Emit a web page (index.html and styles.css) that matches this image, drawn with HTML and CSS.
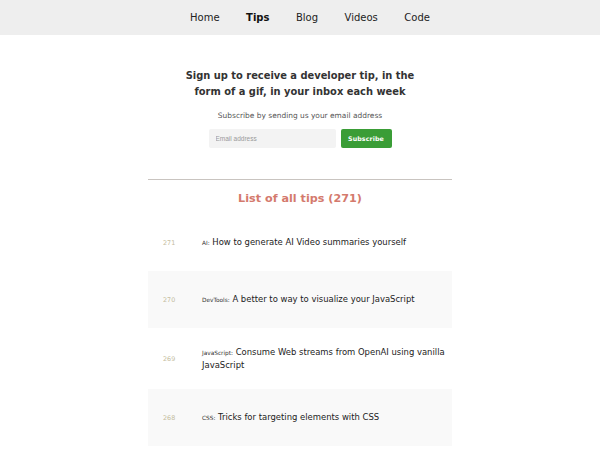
FILE: index.html
```html
<!DOCTYPE html>
<html lang="en">
<head>
<meta charset="utf-8">
<title>Tips</title>
<link rel="stylesheet" href="styles.css">
</head>
<body>
<nav class="topnav">
  <a class="navlink" href="#">Home</a>
  <a class="navlink active" href="#">Tips</a>
  <a class="navlink" href="#">Blog</a>
  <a class="navlink" href="#">Videos</a>
  <a class="navlink" href="#">Code</a>
</nav>
<main class="page">
  <section class="signup">
    <h2 class="signup-title">Sign up to receive a developer tip, in the form of a gif, in your inbox each week</h2>
    <p class="signup-sub">Subscribe by sending us your email address</p>
    <form class="signup-form">
      <input class="email" type="email" placeholder="Email address">
      <button class="subscribe" type="button">Subscribe</button>
    </form>
  </section>
  <hr class="divider">
  <h2 class="list-title">List of all tips (271)</h2>
  <ul class="tips">
    <li class="tip"><span class="num">271</span><span class="text"><span class="cat">AI:</span> How to generate AI Video summaries yourself</span></li>
    <li class="tip alt"><span class="num">270</span><span class="text"><span class="cat">DevTools:</span> A better to way to visualize your JavaScript</span></li>
    <li class="tip"><span class="num">269</span><span class="text"><span class="cat">JavaScript:</span> Consume Web streams from OpenAI using vanilla JavaScript</span></li>
    <li class="tip alt"><span class="num">268</span><span class="text"><span class="cat">CSS:</span> Tricks for targeting elements with CSS</span></li>
  </ul>
</main>
</body>
</html>
```

FILE: styles.css
```css
* { box-sizing: border-box; }
html, body { margin: 0; padding: 0; background: #fff; }
body {
  font-family: "DejaVu Sans", Verdana, sans-serif;
  color: #222;
}
.topnav {
  height: 35px;
  background: #eeeeee;
  display: flex;
  justify-content: center;
  align-items: center;
  gap: 26.5px;
  padding-left: 20px;
}
.navlink {
  font-size: 10px;
  color: #222;
  text-decoration: none;
  line-height: 12px;
}
.navlink.active { font-weight: bold; color: #111; }

.page {
  width: 304px;
  margin: 0 auto;
}
.signup {
  padding-top: 33px;
  text-align: center;
}
.signup-title {
  margin: 0 auto;
  width: 240px;
  font-size: 9.9px;
  line-height: 16px;
  font-weight: bold;
  color: #333;
}
.signup-sub {
  margin: 10px 0 0;
  font-size: 7.45px;
  line-height: 12px;
  color: #555;
}
.signup-form {
  margin-top: 7px;
  display: flex;
  justify-content: center;
  gap: 5px;
}
.email {
  width: 127px;
  height: 19px;
  border: none;
  border-radius: 2px;
  background: #f3f3f3;
  padding: 0 7px;
  font-family: "Liberation Sans", Arial, sans-serif;
  font-size: 6.5px;
  color: #333;
  outline: none;
}
.email::placeholder { color: #9a9a9a; }
.subscribe {
  width: 51px;
  height: 19px;
  border: none;
  border-radius: 2px;
  background: #3a9d36;
  color: #fff;
  font-family: "DejaVu Sans", Verdana, sans-serif;
  font-weight: bold;
  font-size: 6.3px;
  letter-spacing: 0.1px;
  padding: 0;
}
.divider {
  margin: 31px 0 0;
  border: none;
  border-top: 1px solid #c9c4c0;
  height: 0;
}
.list-title {
  margin: 12px 0 0;
  text-align: center;
  font-size: 11.2px;
  line-height: 14px;
  font-weight: bold;
  color: #d47a6d;
}
.tips {
  list-style: none;
  margin: 8px 0 0;
  padding: 0;
}
.tip {
  display: flex;
  align-items: center;
  min-height: 57px;
  padding: 17.5px 4px 17.5px 0;
}
.tip.alt { background: #f9f9f9; }
.num {
  flex: 0 0 54px;
  padding-left: 15px;
  font-size: 6.4px;
  color: #c4bc9e;
}
.text {
  flex: 1;
  font-size: 8.45px;
  line-height: 13px;
  color: #222;
}
.cat {
  font-size: 5.8px;
  line-height: 8px;
  color: #333;
}
```
